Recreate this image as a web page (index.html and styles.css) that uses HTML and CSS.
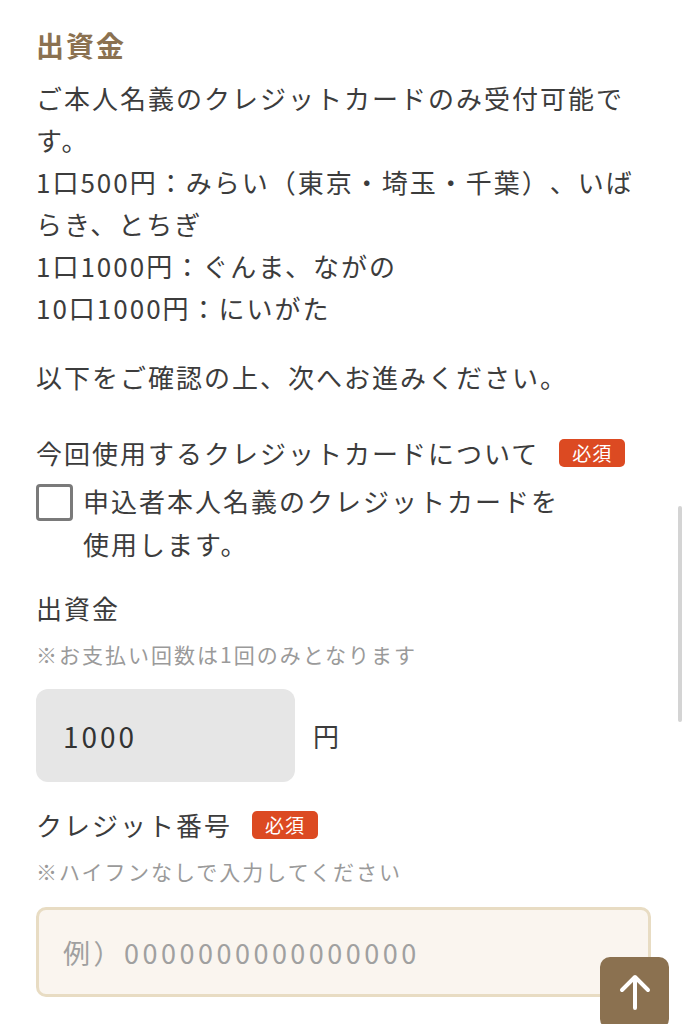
FILE: index.html
```html
<!DOCTYPE html>
<html lang="ja">
<head>
    <meta charset="UTF-8">
    <meta name="viewport" content="width=device-width, initial-scale=1.0">
    <title>出資金</title>
    <link rel="stylesheet" href="styles.css">
</head>
<body>

    <div class="form-page">
        <h2 class="section-title">出資金</h2>
        <p class="lead">
            ご本人名義のクレジットカードのみ受付可能です。<br>
            1口500円：みらい（東京・埼玉・千葉）、いばらき、とちぎ<br>
            1口1000円：ぐんま、ながの<br>
            10口1000円：にいがた
        </p>
        <p class="lead confirm">以下をご確認の上、次へお進みください。</p>

        <!-- card owner -->
        <div class="field">
            <div class="field-label">今回使用するクレジットカードについて<span class="required">必須</span></div>
            <label class="check-row">
                <span class="check-box"></span>
                <span class="check-text">申込者本人名義のクレジットカードを<br>使用します。</span>
            </label>
        </div>

        <!-- amount -->
        <div class="field">
            <div class="field-label">出資金</div>
            <div class="field-note">※お支払い回数は1回のみとなります</div>
            <div class="amount-row">
                <div class="amount-box">1000</div>
                <span class="unit">円</span>
            </div>
        </div>

        <!-- card number -->
        <div class="field">
            <div class="field-label">クレジット番号<span class="required">必須</span></div>
            <div class="field-note">※ハイフンなしで入力してください</div>
            <input class="text-input" type="text" placeholder="例）0000000000000000">
        </div>
    </div>

    <div class="scroll-bar"></div>
    <a class="to-top" href="#">
        <svg width="34" height="38" viewBox="0 0 34 38">
            <path d="M17 35 V5 M4 17 L17 4 L30 17" fill="none" stroke="#fff" stroke-width="4" stroke-linecap="round" stroke-linejoin="round"/>
        </svg>
    </a>

</body>
</html>
```

FILE: styles.css
```css
body {
    margin: 0;
    background: #fff;
    font-family: "Noto Sans CJK JP", "Noto Sans", sans-serif;
    color: #3c3c3c;
    text-spacing-trim: space-all;
}
.form-page {
    padding: 24px 36px 40px;
}
.section-title {
    margin: 0 0 11px;
    font-size: 28px;
    line-height: 42px;
    font-weight: bold;
    letter-spacing: 2px;
    color: #8b7150;
}
.lead {
    margin: 0;
    font-size: 26px;
    line-height: 42px;
    letter-spacing: 2px;
}
.lead.confirm {
    margin-top: 27px;
}
.field {
    margin-top: 22px;
}
.field:first-of-type {
    margin-top: 34px;
}
.field-label {
    display: flex;
    align-items: center;
    font-size: 26px;
    line-height: 42px;
    letter-spacing: 2px;
}
.required {
    display: inline-block;
    margin-left: 20px;
    padding: 0 13px;
    height: 28px;
    line-height: 28px;
    border-radius: 5px;
    background: #dc4a22;
    color: #fff;
    font-size: 19px;
    letter-spacing: 1px;
}
.check-row {
    display: flex;
    align-items: flex-start;
    margin-top: 5px;
    font-size: 26px;
    line-height: 43px;
    letter-spacing: 2px;
}
.check-box {
    flex: none;
    box-sizing: border-box;
    width: 37px;
    height: 37px;
    margin-top: 5px;
    margin-right: 10px;
    border: 3px solid #7a7a7a;
    border-radius: 4px;
}
.field-note {
    margin-top: 10px;
    font-size: 21px;
    line-height: 30px;
    letter-spacing: 2px;
    color: #9a9a9a;
}
.amount-row {
    display: flex;
    align-items: center;
    margin-top: 20px;
}
.amount-box {
    box-sizing: border-box;
    width: 259px;
    height: 93px;
    padding-left: 27px;
    display: flex;
    align-items: center;
    border-radius: 12px;
    background: #e6e6e6;
    font-size: 28px;
    letter-spacing: 3px;
    color: #333;
}
.unit {
    margin-left: 18px;
    font-size: 26px;
}
.text-input {
    display: block;
    box-sizing: border-box;
    width: 100%;
    height: 90px;
    margin-top: 21px;
    padding: 0 24px;
    border: 3px solid #e8dcc3;
    border-radius: 10px;
    background: #faf5ef;
    font-family: inherit;
    font-size: 27px;
    letter-spacing: 3.5px;
    color: #333;
    outline: none;
}
.text-input::placeholder {
    color: #a0a0a0;
}
.scroll-bar {
    position: fixed;
    left: 678px;
    top: 506px;
    width: 4px;
    height: 216px;
    border-radius: 2px;
    background: #d4d4d4;
}
.to-top {
    position: fixed;
    left: 600px;
    top: 957px;
    width: 69px;
    height: 72px;
    border-radius: 10px;
    background: #8b7150;
    display: flex;
    justify-content: center;
    padding-top: 16px;
    box-sizing: border-box;
}
```
